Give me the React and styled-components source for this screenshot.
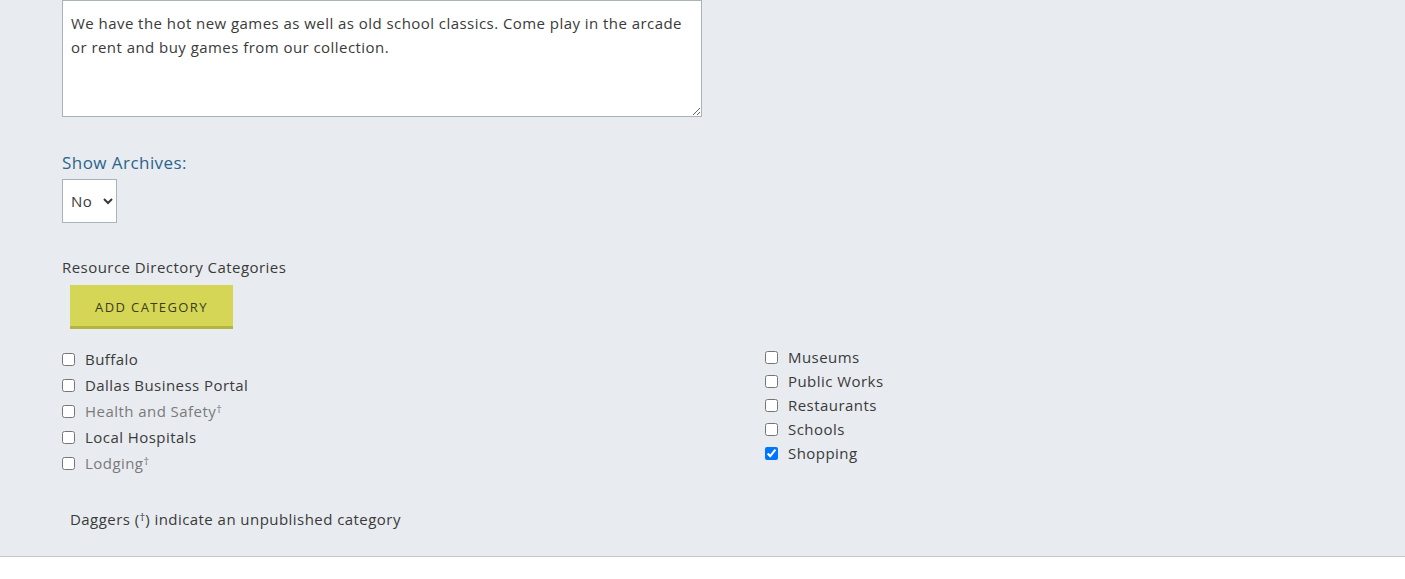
import React from "react";
import styled, { createGlobalStyle } from "styled-components";

const GlobalStyle = createGlobalStyle`
  html, body {
    margin: 0;
    padding: 0;
    background: #ffffff;
    font-family: "Open Sans", "Liberation Sans", sans-serif;
    letter-spacing: 0.45px;
    color: #3a3a3a;
  }
`;

const leftCats = [
  { name: "Buffalo" },
  { name: "Dallas Business Portal" },
  { name: "Health and Safety", unpublished: true },
  { name: "Local Hospitals" },
  { name: "Lodging", unpublished: true },
];

const rightCats = [
  { name: "Museums" },
  { name: "Public Works" },
  { name: "Restaurants" },
  { name: "Schools" },
  { name: "Shopping", checked: true },
];

export default function App() {
  return (
    <>
      <GlobalStyle />
      <Panel>
        <Description
          defaultValue="We have the hot new games as well as old school classics. Come play in the arcade or rent and buy games from our collection."
        />

        <FieldLabel>Show Archives:</FieldLabel>
        <Select defaultValue="No">
          <option>No</option>
          <option>Yes</option>
        </Select>

        <SectionTitle>Resource Directory Categories</SectionTitle>
        <AddButton type="button">Add Category</AddButton>

        <Columns>
          <CheckList $row={26}>
            {leftCats.map((c) => (
              <CheckItem key={c.name} $muted={c.unpublished}>
                <input type="checkbox" defaultChecked={c.checked} />
                <span>
                  {c.name}
                  {c.unpublished && <Dagger>†</Dagger>}
                </span>
              </CheckItem>
            ))}
          </CheckList>
          <CheckList $row={24}>
            {rightCats.map((c) => (
              <CheckItem key={c.name} $muted={c.unpublished}>
                <input type="checkbox" defaultChecked={c.checked} />
                <span>{c.name}</span>
              </CheckItem>
            ))}
          </CheckList>
        </Columns>

        <Note>
          Daggers (<Dagger>†</Dagger>) indicate an unpublished category
        </Note>
      </Panel>
    </>
  );
}

const Panel = styled.div`
  background: #e8ecf0;
  border-bottom: 1px solid #c3c8ce;
  padding: 0 62px 25px;
  display: flex;
  flex-direction: column;
  align-items: flex-start;
`;

const Description = styled.textarea`
  box-sizing: border-box;
  width: 640px;
  height: 117px;
  padding: 10px 8px;
  border: 1px solid #aab2bb;
  background: #fff;
  font-family: inherit;
  letter-spacing: inherit;
  font-size: 15px;
  line-height: 24px;
  color: #3a3a3a;
  resize: vertical;
  outline: none;
`;

const FieldLabel = styled.label`
  margin-top: 34px;
  font-size: 17px;
  line-height: 24px;
  color: #2b648c;
`;

const Select = styled.select`
  margin-top: 4px;
  box-sizing: border-box;
  width: 55px;
  height: 44px;
  padding: 0 4px 0 4px;
  border: 1px solid #aab2bb;
  border-radius: 0;
  background: #fff;
  font-family: inherit;
  letter-spacing: inherit;
  font-size: 15px;
  color: #3a3a3a;
`;

const SectionTitle = styled.div`
  margin-top: 32px;
  font-size: 15px;
  line-height: 24px;
`;

const AddButton = styled.button`
  margin: 6px 0 0 8px;
  box-sizing: border-box;
  width: 163px;
  height: 44px;
  border: none;
  border-bottom: 3px solid #b4b540;
  background: #d5d655;
  color: #3b3d22;
  font-family: inherit;
  font-size: 13px;
  letter-spacing: 1.4px;
  text-transform: uppercase;
  padding: 2px 0 0;
  cursor: pointer;
`;

const Columns = styled.div`
  margin-top: 17px;
  display: grid;
  grid-template-columns: 703px 300px;
  align-items: start;
`;

const CheckList = styled.div`
  display: flex;
  flex-direction: column;
  margin-top: ${(p) => (p.$row === 24 ? "-1px" : "0")};

  & > label {
    height: ${(p) => p.$row}px;
  }
`;

const CheckItem = styled.label`
  display: flex;
  align-items: center;
  gap: 10px;
  font-size: 15px;
  color: ${(p) => (p.$muted ? "#7a7a7a" : "#3a3a3a")};

  input {
    margin: 0;
    width: 13px;
    height: 13px;
  }
`;

const Dagger = styled.sup`
  font-size: 11px;
  vertical-align: 4px;
  line-height: 0;
  letter-spacing: 0;
`;

const Note = styled.div`
  margin: 31px 0 0 8px;
  font-size: 15px;
  line-height: 24px;
`;
